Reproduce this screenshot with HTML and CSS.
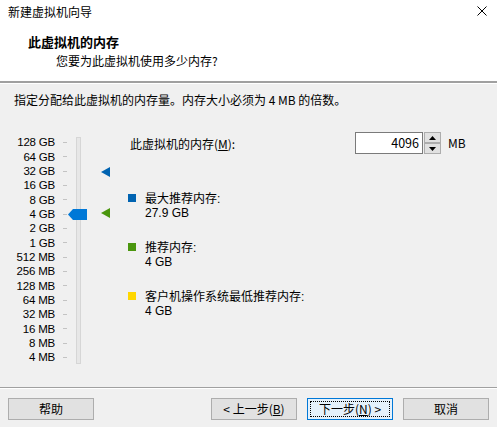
FILE: index.html
```html
<!DOCTYPE html>
<html lang="zh-CN">
<head>
<meta charset="utf-8">
<title>新建虚拟机向导</title>
<link rel="stylesheet" href="styles.css">
</head>
<body>
<div class="window">
  <div class="top">
    <div class="titlebar">
      <span class="title">新建虚拟机向导</span>
      <svg class="close" width="10" height="10" viewBox="0 0 10 10"><path d="M0.5 0.5 L9.5 9.5 M9.5 0.5 L0.5 9.5" stroke="#000" stroke-width="1" fill="none"/></svg>
    </div>
    <div class="header">
      <div class="h-title">此虚拟机的内存</div>
      <div class="h-sub">您要为此虚拟机使用多少内存?</div>
    </div>
  </div>
  <div class="content">
    <div class="desc">指定分配给此虚拟机的内存量。内存大小必须为 4 MB 的倍数。</div>
    <div class="main">
      <div class="slider">
        <div class="scale">
          <div class="row"><span class="lbl">128 GB</span><span class="tick"></span></div>
          <div class="row"><span class="lbl">64 GB</span><span class="tick"></span></div>
          <div class="row"><span class="lbl">32 GB</span><span class="tick"></span></div>
          <div class="row"><span class="lbl">16 GB</span><span class="tick"></span></div>
          <div class="row"><span class="lbl">8 GB</span><span class="tick"></span></div>
          <div class="row"><span class="lbl">4 GB</span><span class="tick"></span></div>
          <div class="row"><span class="lbl">2 GB</span><span class="tick"></span></div>
          <div class="row"><span class="lbl">1 GB</span><span class="tick"></span></div>
          <div class="row"><span class="lbl">512 MB</span><span class="tick"></span></div>
          <div class="row"><span class="lbl">256 MB</span><span class="tick"></span></div>
          <div class="row"><span class="lbl">128 MB</span><span class="tick"></span></div>
          <div class="row"><span class="lbl">64 MB</span><span class="tick"></span></div>
          <div class="row"><span class="lbl">32 MB</span><span class="tick"></span></div>
          <div class="row"><span class="lbl">16 MB</span><span class="tick"></span></div>
          <div class="row"><span class="lbl">8 MB</span><span class="tick"></span></div>
          <div class="row"><span class="lbl">4 MB</span><span class="tick"></span></div>
        </div>
        <div class="track"></div>
        <svg class="thumb" width="19" height="11" viewBox="0 0 19 11"><path d="M0 5.5 L5 0 L19 0 L19 11 L5 11 Z" fill="#0078d7"/></svg>
        <svg class="marker marker-max" width="9" height="10" viewBox="0 0 9 10"><path d="M0 5 L9 0 L9 10 Z" fill="#0063b1"/></svg>
        <svg class="marker marker-rec" width="9" height="10" viewBox="0 0 9 10"><path d="M0 5 L9 0 L9 10 Z" fill="#4a960e"/></svg>
      </div>
      <div class="info">
        <div class="mem-row">
          <span class="mem-label">此虚拟机的内存(<u>M</u>):</span>
          <div class="spin">
            <div class="spin-input">4096</div>
            <div class="spin-btns">
              <div class="spin-btn"><svg width="7" height="4" viewBox="0 0 7 4"><path d="M0 4 L3.5 0 L7 4 Z" fill="#000"/></svg></div>
              <div class="spin-btn"><svg width="7" height="4" viewBox="0 0 7 4"><path d="M0 0 L3.5 4 L7 0 Z" fill="#000"/></svg></div>
            </div>
          </div>
          <span class="unit">MB</span>
        </div>
        <div class="legend">
          <div class="item"><span class="sq sq-blue"></span><div class="txt"><div>最大推荐内存:</div><div>27.9 GB</div></div></div>
          <div class="item"><span class="sq sq-green"></span><div class="txt"><div>推荐内存:</div><div>4 GB</div></div></div>
          <div class="item"><span class="sq sq-yellow"></span><div class="txt"><div>客户机操作系统最低推荐内存:</div><div>4 GB</div></div></div>
        </div>
      </div>
    </div>
  </div>
  <div class="footer">
    <button class="btn">帮助</button>
    <div class="spacer"></div>
    <button class="btn">&lt; 上一步(<u>B</u>)</button>
    <button class="btn btn-default"><span class="focus">下一步(<u>N</u>) &gt;</span></button>
    <button class="btn">取消</button>
  </div>
</div>
</body>
</html>
```

FILE: styles.css
```css
* { box-sizing: border-box; }
html, body {
  margin: 0;
  padding: 0;
}
body {
  width: 497px;
  height: 427px;
  overflow: hidden;
  background: #f0f0f0;
  font-family: "Noto Sans CJK SC", "Noto Sans", sans-serif;
  font-size: 12px;
  color: #000;
}
.window {
  display: flex;
  flex-direction: column;
  height: 427px;
}
.top {
  background: #fff;
  height: 84px;
  border-bottom: 1px solid #fff;
  box-shadow: inset 0 -2px 0 #a0a0a0;
  display: flex;
  flex-direction: column;
}
.titlebar {
  height: 24px;
  display: flex;
  align-items: center;
  justify-content: space-between;
  padding: 0 10px 0 8px;
}
.title {
  line-height: 16px;
  margin-top: -1px;
}
.close { margin-top: -2px; }
.header {
  padding-left: 28px;
  padding-top: 10px;
}
.h-title {
  font-weight: bold;
  font-size: 13px;
  line-height: 16px;
}
.h-sub {
  padding-left: 28px;
  line-height: 16px;
  margin-top: 3px;
}
.content {
  flex: 1;
  padding: 8px 0 0 14px;
}
.desc {
  line-height: 16px;
}
.main {
  display: flex;
  margin-top: 24px;
}
.slider {
  position: relative;
  display: flex;
  width: 101px;
  margin-left: -14px;
  padding-top: 3.3px;
}
.scale {
  display: flex;
  flex-direction: column;
}
.row {
  display: flex;
  align-items: center;
  height: 14.33px;
}
.lbl {
  width: 55px;
  text-align: right;
  font-family: "Liberation Sans", "Noto Sans CJK SC", sans-serif;
  font-size: 11.5px;
  line-height: 14px;
  letter-spacing: -0.2px;
}
.tick {
  width: 4px;
  height: 1px;
  background: #c3c3c3;
  margin-left: 8px;
}
.track {
  width: 5px;
  height: 227px;
  margin-top: 1.7px;
  margin-left: 9px;
  background: #e7e7e7;
  border: 1px solid #d6d6d6;
}
.thumb {
  position: absolute;
  left: 68px;
  top: 77px;
}
.marker {
  position: absolute;
  left: 101px;
}
.marker-max { top: 35px; }
.marker-rec { top: 76px; }
.info {
  margin-left: 27px;
  width: 340px;
}
.mem-row {
  display: flex;
  align-items: center;
  height: 22px;
}
.mem-label {
  width: 227px;
  padding-left: 2px;
  line-height: 16px;
  margin-top: 2px;
}
.spin {
  display: flex;
  height: 22px;
}
.spin-input {
  width: 68px;
  height: 22px;
  border: 1px solid #7a7a7a;
  background: #fff;
  text-align: right;
  padding-right: 3px;
  line-height: 19px;
  font-size: 12.5px;
}
.spin-btns {
  display: flex;
  flex-direction: column;
  justify-content: space-between;
  width: 18px;
  height: 22px;
  padding: 0 0 0 1px;
}
.spin-btn {
  height: 11px;
  background: #e1e1e1;
  border: 1px solid #adadad;
  display: flex;
  align-items: center;
  justify-content: center;
}
.unit {
  margin-left: 7px;
  line-height: 16px;
}
.legend {
  margin-top: 38px;
  display: flex;
  flex-direction: column;
  gap: 21px;
}
.item {
  display: flex;
  align-items: flex-start;
}
.sq {
  width: 8px;
  height: 8px;
  margin-top: 2px;
  margin-right: 9px;
  flex: none;
}
.sq-blue { background: #0063b1; }
.sq-green { background: #4a960e; }
.sq-yellow { background: #ffd700; }
.txt {
  font-family: "Liberation Sans", "Noto Sans CJK SC", sans-serif;
  line-height: 14px;
}
.footer {
  height: 40px;
  border-top: 1px solid #a0a0a0;
  box-shadow: inset 0 1px 0 #fff;
  display: flex;
  align-items: flex-start;
  padding: 10px 8px 0 8px;
  gap: 10px;
}
.spacer { flex: 1; }
.btn {
  width: 86px;
  height: 22px;
  background: #e1e1e1;
  border: 1px solid #adadad;
  font-family: inherit;
  font-size: 12px;
  color: #000;
  padding: 0;
  line-height: 18px;
  display: flex;
  align-items: center;
  justify-content: center;
}
.btn-default {
  background: #e5f1fb;
  border-color: #0078d7;
  padding: 2px;
}
.focus {
  display: flex;
  align-items: center;
  justify-content: center;
  width: 100%;
  height: 100%;
  border: 1px dotted #000;
}
u { text-decoration-thickness: 1px; text-underline-offset: 1px; }
```
